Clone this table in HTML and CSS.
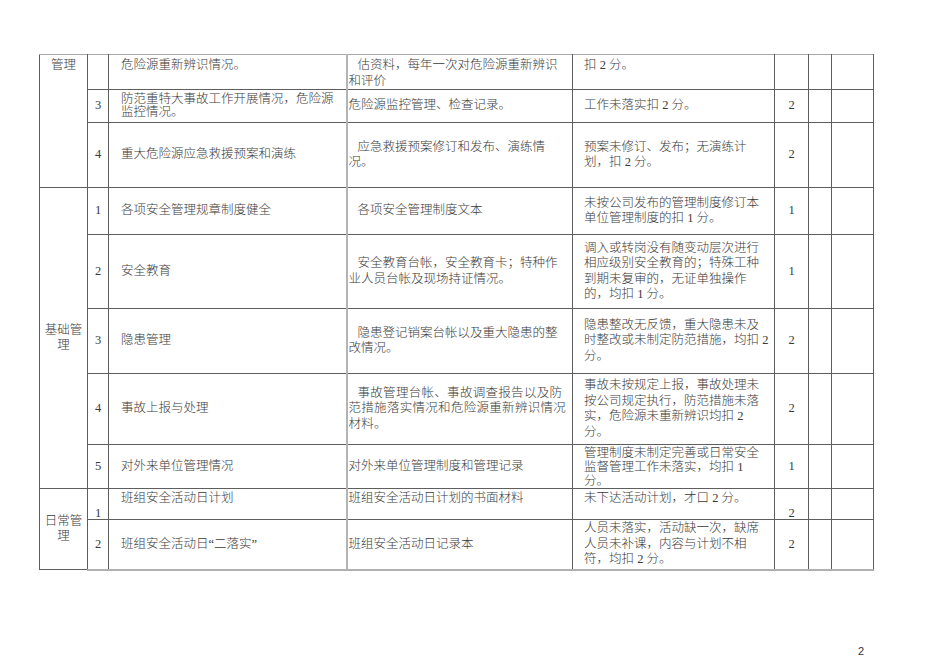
FILE: index.html
```html
<!DOCTYPE html>
<html lang="zh-CN">
<head>
<meta charset="utf-8">
<title>安全检查评分表</title>
<link rel="stylesheet" href="styles.css">
</head>
<body>
<div class="page">
  <table class="sheet">
    <colgroup>
      <col class="w-cat">
      <col class="w-no">
      <col class="w-item">
      <col class="w-basis">
      <col class="w-rule">
      <col class="w-score">
      <col class="w-e1">
      <col class="w-e2">
    </colgroup>
    <tbody>
      <tr class="r1 first">
        <td class="cat top" rowspan="3">管理</td>
        <td class="no"></td>
        <td class="item top">危险源重新辨识情况。</td>
        <td class="basis top ind">估资料，每年一次对危险源重新辨识<br>和评价</td>
        <td class="rule top">扣 2 分。</td>
        <td class="score"></td>
        <td></td>
        <td></td>
      </tr>
      <tr class="r2">
        <td class="no">3</td>
        <td class="item tight">防范重特大事故工作开展情况，危险源<br>监控情况。</td>
        <td class="basis">危险源监控管理、检查记录。</td>
        <td class="rule">工作未落实扣 2 分。</td>
        <td class="score">2</td>
        <td></td>
        <td></td>
      </tr>
      <tr class="r3">
        <td class="no">4</td>
        <td class="item">重大危险源应急救援预案和演练</td>
        <td class="basis ind">应急救援预案修订和发布、演练情<br>况。</td>
        <td class="rule">预案未修订、发布；无演练计<br>划，扣 2 分。</td>
        <td class="score">2</td>
        <td></td>
        <td></td>
      </tr>
      <tr class="r4 sect">
        <td class="cat" rowspan="5">基础管<br>理</td>
        <td class="no">1</td>
        <td class="item">各项安全管理规章制度健全</td>
        <td class="basis ind">各项安全管理制度文本</td>
        <td class="rule">未按公司发布的管理制度修订本<br>单位管理制度的扣 1 分。</td>
        <td class="score">1</td>
        <td></td>
        <td></td>
      </tr>
      <tr class="r5">
        <td class="no">2</td>
        <td class="item">安全教育</td>
        <td class="basis ind">安全教育台帐，安全教育卡；特种作<br>业人员台帐及现场持证情况。</td>
        <td class="rule">调入或转岗没有随变动层次进行<br>相应级别安全教育的；特殊工种<br>到期未复审的，无证单独操作<br>的，均扣 1 分。</td>
        <td class="score">1</td>
        <td></td>
        <td></td>
      </tr>
      <tr class="r6">
        <td class="no">3</td>
        <td class="item">隐患管理</td>
        <td class="basis ind">隐患登记销案台帐以及重大隐患的整<br>改情况。</td>
        <td class="rule">隐患整改无反馈，重大隐患未及<br>时整改或未制定防范措施，均扣 2<br>分。</td>
        <td class="score">2</td>
        <td></td>
        <td></td>
      </tr>
      <tr class="r7">
        <td class="no">4</td>
        <td class="item">事故上报与处理</td>
        <td class="basis ind wide">事故管理台帐、事故调查报告以及防<br>范措施落实情况和危险源重新辨识情况<br>材料。</td>
        <td class="rule">事故未按规定上报，事故处理未<br>按公司规定执行，防范措施未落<br>实，危险源未重新辨识均扣 2<br>分。</td>
        <td class="score">2</td>
        <td></td>
        <td></td>
      </tr>
      <tr class="r8">
        <td class="no">5</td>
        <td class="item">对外来单位管理情况</td>
        <td class="basis">对外来单位管理制度和管理记录</td>
        <td class="rule tight">管理制度未制定完善或日常安全<br>监督管理工作未落实，均扣 1<br>分。</td>
        <td class="score">1</td>
        <td></td>
        <td></td>
      </tr>
      <tr class="r9 sect">
        <td class="cat" rowspan="2">日常管<br>理</td>
        <td class="no bottom">1</td>
        <td class="item top">班组安全活动日计划</td>
        <td class="basis top">班组安全活动日计划的书面材料</td>
        <td class="rule top">未下达活动计划，才口 2 分。</td>
        <td class="score bottom">2</td>
        <td></td>
        <td></td>
      </tr>
      <tr class="r10 last">
        <td class="no">2</td>
        <td class="item">班组安全活动日“二落实”</td>
        <td class="basis">班组安全活动日记录本</td>
        <td class="rule">人员未落实，活动缺一次，缺席<br>人员未补课，内容与计划不相<br>符，均扣 2 分。</td>
        <td class="score">2</td>
        <td></td>
        <td></td>
      </tr>
    </tbody>
  </table>
  <div class="page-num">2</div>
</div>
</body>
</html>
```

FILE: styles.css
```css
html, body {
  margin: 0;
  padding: 0;
  background: #ffffff;
}

.page {
  padding: 54px 0 0 39px;
  font-family: "Liberation Serif", "Noto Sans CJK SC", serif;
  color: #3a3a3a;
}

.sheet {
  border-collapse: collapse;
  table-layout: fixed;
  width: 834px;
  font-size: 12.5px;
  line-height: 15.5px;
  font-weight: 300;
}

.w-cat { width: 48px; }
.w-no { width: 21px; }
.w-item { width: 238px; }
.w-basis { width: 226px; }
.w-rule { width: 202px; }
.w-score { width: 34px; }
.w-e1 { width: 23px; }
.w-e2 { width: 42px; }

.sheet td {
  border: 1px solid #5e5e5e;
  padding: 0 2px;
  vertical-align: middle;
  white-space: nowrap;
  overflow: visible;
}

.sheet tr.first td {
  border-top: 1px solid #a8a8a8;
}

.sheet tr.last td {
  border-bottom: 2px solid #b0b0b0;
}

.sheet td.basis {
  border-left: 2px solid #b4b4b4;
  padding-left: 1px;
  padding-right: 0;
}

.r1 { height: 34px; }
.r2 { height: 33px; }
.r3 { height: 65px; }
.r4 { height: 47px; }
.r5 { height: 74px; }
.r6 { height: 65px; }
.r7 { height: 71px; }
.r8 { height: 44px; }
.r9 { height: 31px; }
.r10 { height: 50px; }

.sheet td.cat {
  text-align: center;
  padding: 0 3px;
}

.sheet td.cat.top {
  vertical-align: top;
  padding-top: 3px;
}

.no {
  text-align: center;
}

.sheet td.item {
  padding-left: 12px;
}

.sheet td.rule {
  padding-left: 11px;
}

.score {
  text-align: center;
}

.sheet td.top {
  vertical-align: top;
  padding-top: 3px;
}

.sheet td.bottom {
  vertical-align: bottom;
  line-height: 12px;
}

.sheet .r9 td.top {
  padding-top: 2px;
}

.tight {
  line-height: 13px;
}

.sheet td.rule.tight {
  line-height: 14px;
}

.ind {
  text-indent: 9px;
}

.wide {
  letter-spacing: 0.3px;
}

.page-num {
  width: 825px;
  margin-top: 74px;
  text-align: right;
  font-family: "Liberation Sans", "DejaVu Sans", sans-serif;
  font-size: 11px;
  line-height: 13px;
  color: #333333;
}
```
